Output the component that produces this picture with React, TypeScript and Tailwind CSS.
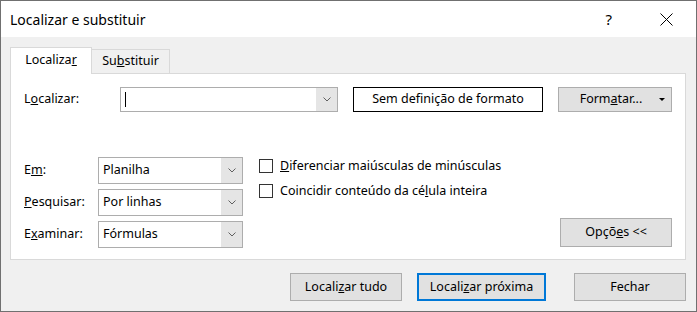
import React from 'react'

const font = { fontFamily: '"Noto Sans", "Liberation Sans", sans-serif' }

function Chevron() {
  return (
    <svg width="8" height="5" viewBox="0 0 8 5" className="text-[#606060]">
      <path d="M0.5 0.5 L4 4 L7.5 0.5" fill="none" stroke="currentColor" strokeWidth="1" />
    </svg>
  )
}

function Combo({ value }: { value: string }) {
  return (
    <div className="flex h-[27px] w-[145px] border border-[#adadad] bg-white">
      <div className="flex flex-1 items-center pl-[4px] text-[12.5px] text-black">{value}</div>
      <div className="flex w-[21px] items-center justify-center bg-[#e5e5e5]">
        <Chevron />
      </div>
    </div>
  )
}

function Check({ children }: { children: React.ReactNode }) {
  return (
    <div className="flex h-[18px] items-center gap-[7px] text-[12.5px] text-black">
      <span className="h-[14px] w-[14px] border border-[#333]" />
      <span>{children}</span>
    </div>
  )
}

export default function App() {
  return (
    <div
      style={font}
      className="flex h-[312px] w-[697px] flex-col border border-[#707070] bg-[#f0f0f0] text-black"
    >
      {/* title bar */}
      <div className="flex h-[36px] shrink-0 items-center bg-white pl-[9px]">
        <span className="text-[14px]">Localizar e substituir</span>
        <span className="ml-auto mr-[48px] text-[15px]">?</span>
        <svg width="13" height="13" viewBox="0 0 13 13" className="mr-[23px]">
          <path d="M0.5 0.5 L12.5 12.5 M12.5 0.5 L0.5 12.5" stroke="#000" strokeWidth="1" />
        </svg>
      </div>

      <div className="flex flex-1 flex-col px-[9px] pt-[10px]">
        {/* tabs */}
        <div className="flex h-[26px] items-end">
          <div className="relative z-10 -mb-px flex h-[27px] w-[82px] items-center justify-center border border-b-0 border-[#d9d9d9] bg-white pb-[2px] text-[12.5px]">
            <span>
              Localiza<u>r</u>
            </span>
          </div>
          <div className="flex h-[24px] w-[78px] items-center justify-center border border-b-0 border-l-0 border-[#d9d9d9] text-[12.5px]">
            <span>
              Su<u>b</u>stituir
            </span>
          </div>
        </div>

        {/* panel */}
        <div className="flex h-[187px] w-[676px] flex-col border border-[#d9d9d9] bg-white px-[13px] pb-[11px] pt-[13px]">
          <div className="flex h-[25px] items-center">
            <span className="w-[96px] text-[12.5px]">
              L<u>o</u>calizar:
            </span>
            <div className="flex h-[25px] w-[218px] border border-[#adadad] bg-white">
              <div className="flex flex-1 items-center pl-[4px]">
                <span className="h-[15px] w-px bg-black" />
              </div>
              <div className="flex w-[21px] items-center justify-center bg-[#e5e5e5]">
                <Chevron />
              </div>
            </div>
            <div className="ml-[15px] flex h-[25px] w-[190px] items-center justify-center border border-black text-[12.5px]">
              Sem definição de formato
            </div>
            <div className="relative ml-[15px] flex h-[25px] w-[114px] items-center justify-center border border-[#adadad] bg-[#e1e1e1] pr-[8px] text-[12.5px]">
              <span>
                Form<u>a</u>tar...
              </span>
              <span className="absolute right-[6px] top-[10px] h-0 w-0 border-x-[3px] border-t-[3px] border-x-transparent border-t-black" />
            </div>
          </div>

          <div className="mt-auto flex items-end">
            <div className="grid grid-cols-[74px_145px] gap-y-[5px]">
              <span className="self-center text-[12.5px]">
                E<u>m</u>:
              </span>
              <Combo value="Planilha" />
              <span className="self-center text-[12.5px]">
                <u>P</u>esquisar:
              </span>
              <Combo value="Por linhas" />
              <span className="self-center text-[12.5px]">
                E<u>x</u>aminar:
              </span>
              <Combo value="Fórmulas" />
            </div>
            <div className="ml-[16px] flex flex-col gap-[7px] self-start pt-0">
              <Check>
                <u>D</u>iferenciar maiúsculas de minúsculas
              </Check>
              <Check>
                Coincidir conteúdo da cé<u>l</u>ula inteira
              </Check>
            </div>
            <div className="ml-auto mb-[1px] flex h-[29px] w-[112px] items-center justify-center border border-[#adadad] bg-[#e1e1e1] text-[12.5px]">
              <span>
                Opçõ<u>e</u>s &lt;&lt;
              </span>
            </div>
          </div>
        </div>

        {/* bottom buttons */}
        <div className="mt-[13px] flex justify-end pr-[1px]">
          <div className="flex h-[28px] w-[112px] items-center justify-center border border-[#adadad] bg-[#e1e1e1] text-[12.5px]">
            <span>
              Locali<u>z</u>ar tudo
            </span>
          </div>
          <div className="ml-[15px] flex h-[28px] w-[129px] items-center justify-center border-2 border-[#0078d7] bg-[#e1e1e1] text-[12.5px]">
            <span>
              Locali<u>z</u>ar próxima
            </span>
          </div>
          <div className="ml-[28px] flex h-[28px] w-[112px] items-center justify-center border border-[#adadad] bg-[#e1e1e1] text-[12.5px]">
            Fechar
          </div>
        </div>
      </div>
    </div>
  )
}
